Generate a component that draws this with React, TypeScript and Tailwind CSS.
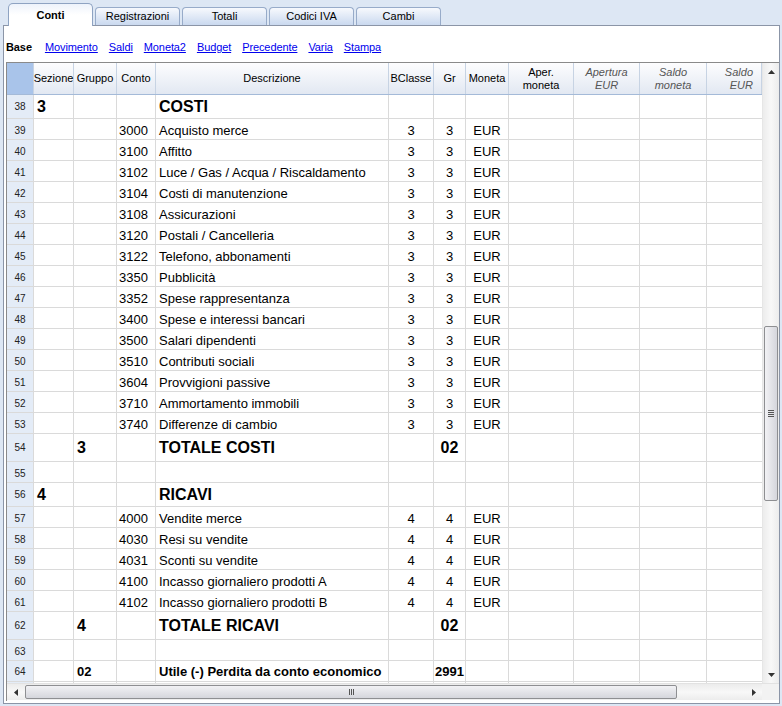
import React from 'react';

type Row = {
  n: number;
  kind: 'title' | 'item' | 'total' | 'blank' | 'result';
  sez?: string;
  grp?: string;
  conto?: string;
  desc?: string;
  bc?: string;
  gr?: string;
  mon?: string;
  cut?: boolean;
};

const costi: [string, string][] = [
  ['3000', 'Acquisto merce'],
  ['3100', 'Affitto'],
  ['3102', 'Luce / Gas / Acqua / Riscaldamento'],
  ['3104', 'Costi di manutenzione'],
  ['3108', 'Assicurazioni'],
  ['3120', 'Postali / Cancelleria'],
  ['3122', 'Telefono, abbonamenti'],
  ['3350', 'Pubblicità'],
  ['3352', 'Spese rappresentanza'],
  ['3400', 'Spese e interessi bancari'],
  ['3500', 'Salari dipendenti'],
  ['3510', 'Contributi sociali'],
  ['3604', 'Provvigioni passive'],
  ['3710', 'Ammortamento immobili'],
  ['3740', 'Differenze di cambio'],
];

const ricavi: [string, string][] = [
  ['4000', 'Vendite merce'],
  ['4030', 'Resi su vendite'],
  ['4031', 'Sconti su vendite'],
  ['4100', 'Incasso giornaliero prodotti A'],
  ['4102', 'Incasso giornaliero prodotti B'],
];

const rows: Row[] = [
  { n: 38, kind: 'title', sez: '3', desc: 'COSTI' },
  ...costi.map(([c, d], i) => ({ n: 39 + i, kind: 'item' as const, conto: c, desc: d, bc: '3', gr: '3', mon: 'EUR' })),
  { n: 54, kind: 'total', grp: '3', desc: 'TOTALE COSTI', gr: '02' },
  { n: 55, kind: 'blank' },
  { n: 56, kind: 'title', sez: '4', desc: 'RICAVI' },
  ...ricavi.map(([c, d], i) => ({ n: 57 + i, kind: 'item' as const, conto: c, desc: d, bc: '4', gr: '4', mon: 'EUR' })),
  { n: 62, kind: 'total', grp: '4', desc: 'TOTALE RICAVI', gr: '02' },
  { n: 63, kind: 'blank' },
  { n: 64, kind: 'result', grp: '02', desc: 'Utile (-) Perdita da conto economico', gr: '2991' },
  // next row only peeks out above the scrollbar
  { n: 65, kind: 'blank', cut: true },
];

const rowHeight: Record<Row['kind'], string> = {
  title: 'h-[24px]',
  item: 'h-[21px]',
  total: 'h-[28px]',
  blank: 'h-[21px]',
  result: 'h-[21px]',
};

// text sits a little low in the plain rows
const rowPad: Record<Row['kind'], string> = {
  title: '',
  item: 'pt-[3px]',
  total: '',
  blank: 'pt-[3px]',
  result: 'pt-px',
};

const textSize: Record<Row['kind'], string> = {
  title: 'text-[16px] font-bold',
  item: 'text-[13px]',
  total: 'text-[16px] font-bold',
  blank: 'text-[13px]',
  result: 'text-[13px] font-bold',
};

const cell = 'flex h-full shrink-0 items-center overflow-hidden whitespace-nowrap border-r border-[#dadada]';

function Tab({ label, active }: { label: string; active?: boolean }) {
  if (active) {
    return (
      <div className="relative z-10 -mb-px flex h-[23px] w-[85px] items-center justify-center rounded-t-[5px] border border-b-0 border-[#8ea3c2] bg-gradient-to-b from-[#eef3fb] via-white to-white text-[11px] font-bold">
        {label}
      </div>
    );
  }
  return (
    <div className="flex h-[18px] w-[85px] items-center justify-center rounded-t-[4px] border border-b-0 border-[#97abc9] bg-gradient-to-b from-[#f7f9fd] to-[#cad9ef] text-[11px]">
      {label}
    </div>
  );
}

function Arrow({ dir }: { dir: 'up' | 'down' | 'left' | 'right' }) {
  const pts = {
    up: '0,4 7,4 3.5,0',
    down: '0,0 7,0 3.5,4',
    left: '4,0 4,7 0,3.5',
    right: '0,0 0,7 4,3.5',
  }[dir];
  const vertical = dir === 'up' || dir === 'down';
  return (
    <svg width={vertical ? 7 : 4} height={vertical ? 4 : 7} viewBox={vertical ? '0 0 7 4' : '0 0 4 7'}>
      <polygon points={pts} fill="#333" />
    </svg>
  );
}

function HeaderCell({ w, children, italic, align = 'center' }: { w: string; children?: React.ReactNode; italic?: boolean; align?: 'center' | 'right' }) {
  return (
    <div
      className={`flex h-full shrink-0 items-center border-r border-[#c7d3e3] px-[2px] text-[11px] leading-[13px] ${w} ${
        align === 'right' ? 'justify-end pr-[8px] text-right' : 'justify-center text-center'
      } ${italic ? 'italic text-[#555]' : 'text-black'}`}
    >
      {children}
    </div>
  );
}

function GridRow({ r }: { r: Row }) {
  const t = `${textSize[r.kind]} ${rowPad[r.kind]}`;
  return (
    <div className={`flex shrink-0 border-b border-[#dadada] ${rowHeight[r.kind]}`}>
      <div className={`${cell} w-[27px] justify-center border-[#d5dfec] bg-[#e4ecf7] text-[10px] text-[#222] ${rowPad[r.kind]}`}>{r.cut ? '' : r.n}</div>
      <div className={`${cell} w-[40px] pl-[3px] ${t}`}>{r.sez}</div>
      <div className={`${cell} w-[43px] pl-[3px] ${t}`}>{r.grp}</div>
      <div className={`${cell} w-[39px] pl-[2px] ${t}`}>{r.conto}</div>
      <div className={`${cell} w-[233px] pl-[3px] ${t}`}>{r.desc}</div>
      <div className={`${cell} w-[45px] justify-center ${t}`}>{r.bc}</div>
      <div className={`${cell} w-[32px] justify-center ${t}`}>{r.gr}</div>
      <div className={`${cell} w-[43px] justify-center ${t}`}>{r.mon}</div>
      <div className={`${cell} w-[65px]`} />
      <div className={`${cell} w-[66px]`} />
      <div className={`${cell} w-[67px]`} />
      <div className={`${cell} w-[55px] border-r-0`} />
    </div>
  );
}

export default function App() {
  const links = ['Movimento', 'Saldi', 'Moneta2', 'Budget', 'Precedente', 'Varia', 'Stampa'];
  return (
    <div className="h-[706px] w-[782px] overflow-hidden bg-[#dde7f4] font-['Liberation_Sans',Arial,sans-serif] text-black">
      {/* tab strip */}
      <div className="flex h-[25px] items-end gap-[2px] pl-[8px]">
        <Tab label="Conti" active />
        <Tab label="Registrazioni" />
        <Tab label="Totali" />
        <Tab label="Codici IVA" />
        <Tab label="Cambi" />
      </div>

      {/* page */}
      <div className="ml-[3px] h-[679px] w-[777px] border border-[#8b95a7] bg-white">
        <div className="flex h-[36px] items-center gap-[11px] pl-[2px] pt-[6px] text-[11px] tracking-[-0.1px]">
          <span className="mr-[2px] font-bold">Base</span>
          {links.map((l) => (
            <span key={l} className="text-[#0000ee] underline">
              {l}
            </span>
          ))}
        </div>

        {/* grid */}
        <div className="ml-[2px] flex h-[639px] w-[773px] flex-col border-l border-t border-[#8a8a8a]">
          <div className="flex h-[620px]">
            <div className="flex w-[755px] flex-col overflow-hidden">
              <div className="flex h-[32px] shrink-0 border-b border-[#a4bad8] bg-gradient-to-b from-[#fdfdfe] to-[#e2e8f2]">
                <div className="h-full w-[27px] shrink-0 border-r border-[#c7d3e3] bg-[#a9c4ea]" />
                <HeaderCell w="w-[40px]">Sezione</HeaderCell>
                <HeaderCell w="w-[43px]">Gruppo</HeaderCell>
                <HeaderCell w="w-[39px]">Conto</HeaderCell>
                <HeaderCell w="w-[233px]">Descrizione</HeaderCell>
                <HeaderCell w="w-[45px]">BClasse</HeaderCell>
                <HeaderCell w="w-[32px]">Gr</HeaderCell>
                <HeaderCell w="w-[43px]">Moneta</HeaderCell>
                <HeaderCell w="w-[65px]">
                  Aper.
                  <br />
                  moneta
                </HeaderCell>
                <HeaderCell w="w-[66px]" italic>
                  Apertura
                  <br />
                  EUR
                </HeaderCell>
                <HeaderCell w="w-[67px]" italic>
                  Saldo
                  <br />
                  moneta
                </HeaderCell>
                <HeaderCell w="w-[55px]" italic align="right">
                  Saldo
                  <br />
                  EUR
                </HeaderCell>
              </div>
              {rows.map((r) => (
                <GridRow key={r.n} r={r} />
              ))}
            </div>

            {/* vertical scrollbar */}
            <div className="flex w-[17px] flex-col border-l border-[#e6e6e6] bg-gradient-to-r from-[#ececec] via-[#f8f8f8] to-[#ececec]">
              <div className="flex h-[17px] items-center justify-center">
                <Arrow dir="up" />
              </div>
              <div className="flex-1 px-px pt-[246px]">
                <div className="flex h-[175px] w-[14px] flex-col items-center justify-center gap-px rounded-[2px] border border-[#8e8f92] bg-gradient-to-r from-[#f2f2f5] to-[#d5d6dc]">
                  <div className="h-px w-[6px] bg-[#555]" />
                  <div className="h-px w-[6px] bg-[#555]" />
                  <div className="h-px w-[6px] bg-[#555]" />
                  <div className="h-px w-[6px] bg-[#555]" />
                </div>
              </div>
              <div className="flex h-[17px] items-center justify-center">
                <Arrow dir="down" />
              </div>
            </div>
          </div>

          {/* horizontal scrollbar */}
          <div className="flex h-[17px] border-t border-[#e2e2e2]">
            <div className="flex w-[755px] items-center bg-gradient-to-b from-[#ececec] via-[#f8f8f8] to-[#ececec]">
              <div className="flex w-[18px] justify-center">
                <Arrow dir="left" />
              </div>
              <div className="flex h-[14px] w-[652px] items-center justify-center gap-px rounded-[2px] border border-[#8e8f92] bg-gradient-to-b from-[#f2f2f5] to-[#d5d6dc]">
                <div className="h-[6px] w-px bg-[#555]" />
                <div className="h-[6px] w-px bg-[#555]" />
                <div className="h-[6px] w-px bg-[#555]" />
              </div>
              <div className="flex flex-1 justify-end pr-[6px]">
                <Arrow dir="right" />
              </div>
            </div>
            <div className="w-[17px] bg-[#f2f2f2]" />
          </div>
        </div>
      </div>
    </div>
  );
}
